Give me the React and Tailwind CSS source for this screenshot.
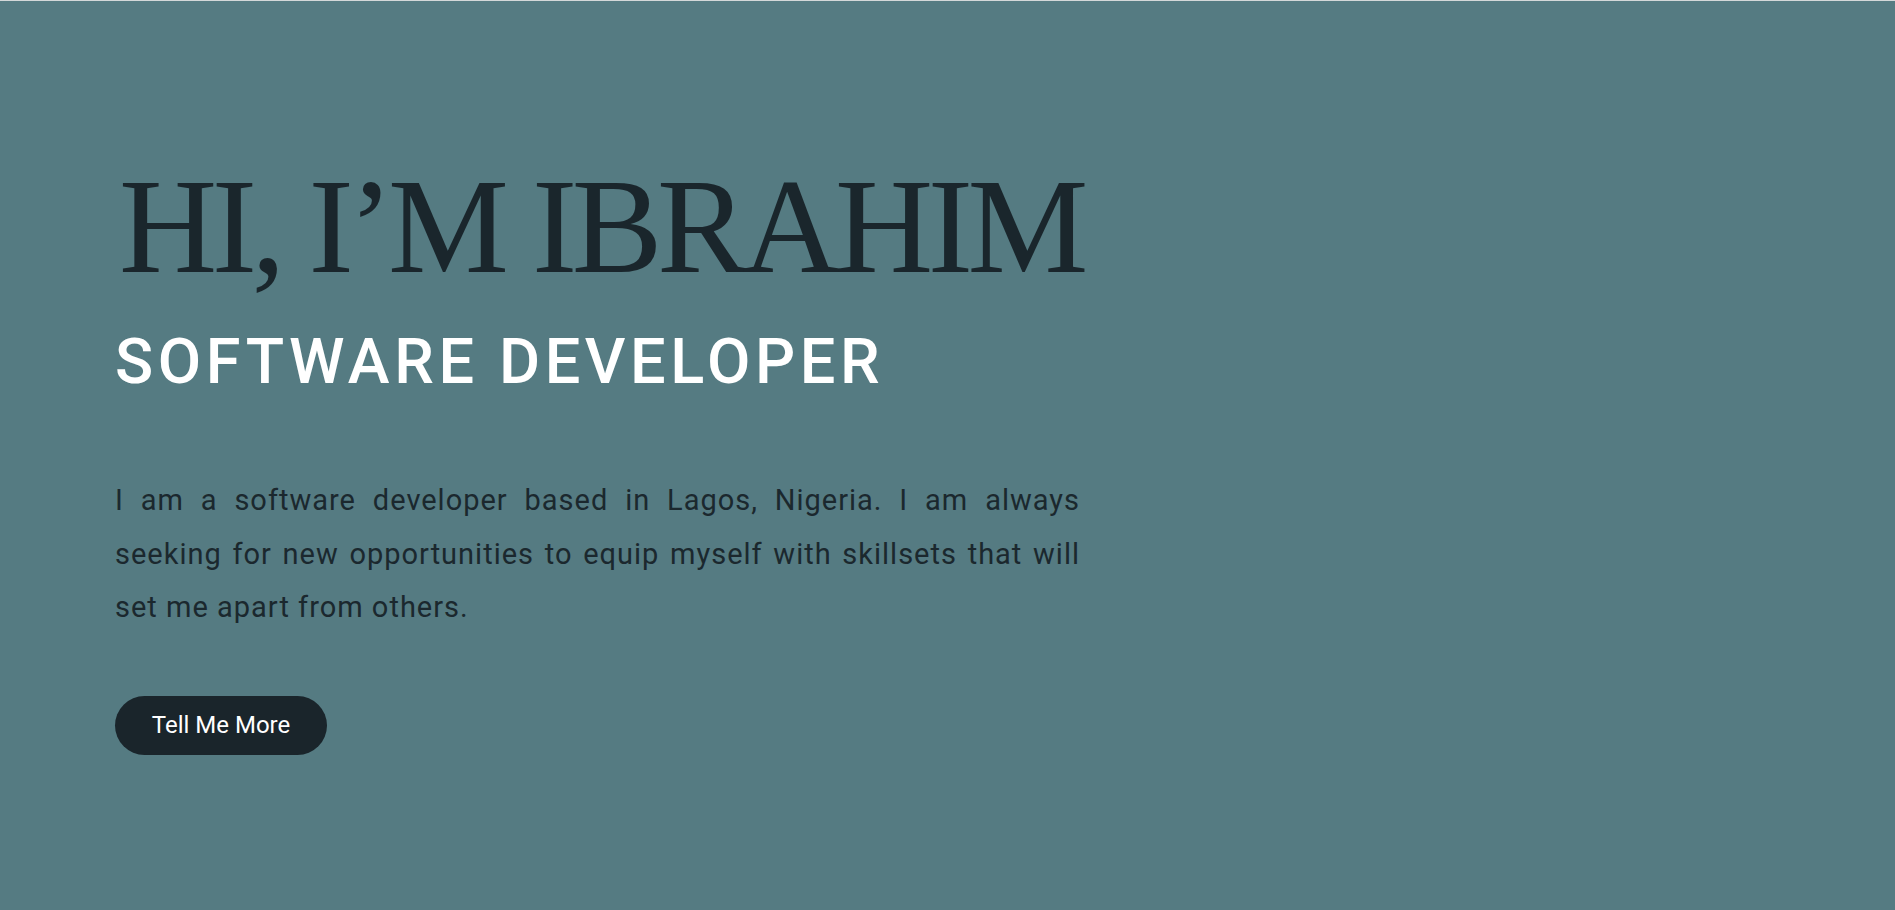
export default function App() {
  return (
    <div className="h-[910px] w-full overflow-hidden border-t border-[#d4d8d9] bg-[#557b82]">
      <section className="pl-[115px] pt-[157px]">
        <h1 className="h-[136px] pl-[4px] font-['Liberation_Serif',serif] text-[136px] leading-[136px] tracking-[-5.5px] text-[#1a262c] whitespace-nowrap">
          HI, I’M IBRAHIM
        </h1>
        <h2 className="mt-[36px] h-[63px] font-['Roboto',sans-serif] text-[63px] leading-[63px] font-medium tracking-[4.6px] text-white whitespace-nowrap">
          SOFTWARE DEVELOPER
        </h2>
        <p className="mt-[81px] w-[965px] text-justify font-['Roboto',sans-serif] text-[29px] leading-[53.5px] tracking-[1px] text-[#1b282e]">
          I am a software developer based in Lagos, Nigeria. I am always seeking for new opportunities to equip myself with skillsets that will set me apart from others.
        </p>
        <button className="mt-[61px] flex h-[59px] w-[212px] items-center justify-center rounded-full bg-[#1a252b] font-['Roboto',sans-serif] text-[24px] text-white">
          Tell Me More
        </button>
      </section>
    </div>
  )
}
